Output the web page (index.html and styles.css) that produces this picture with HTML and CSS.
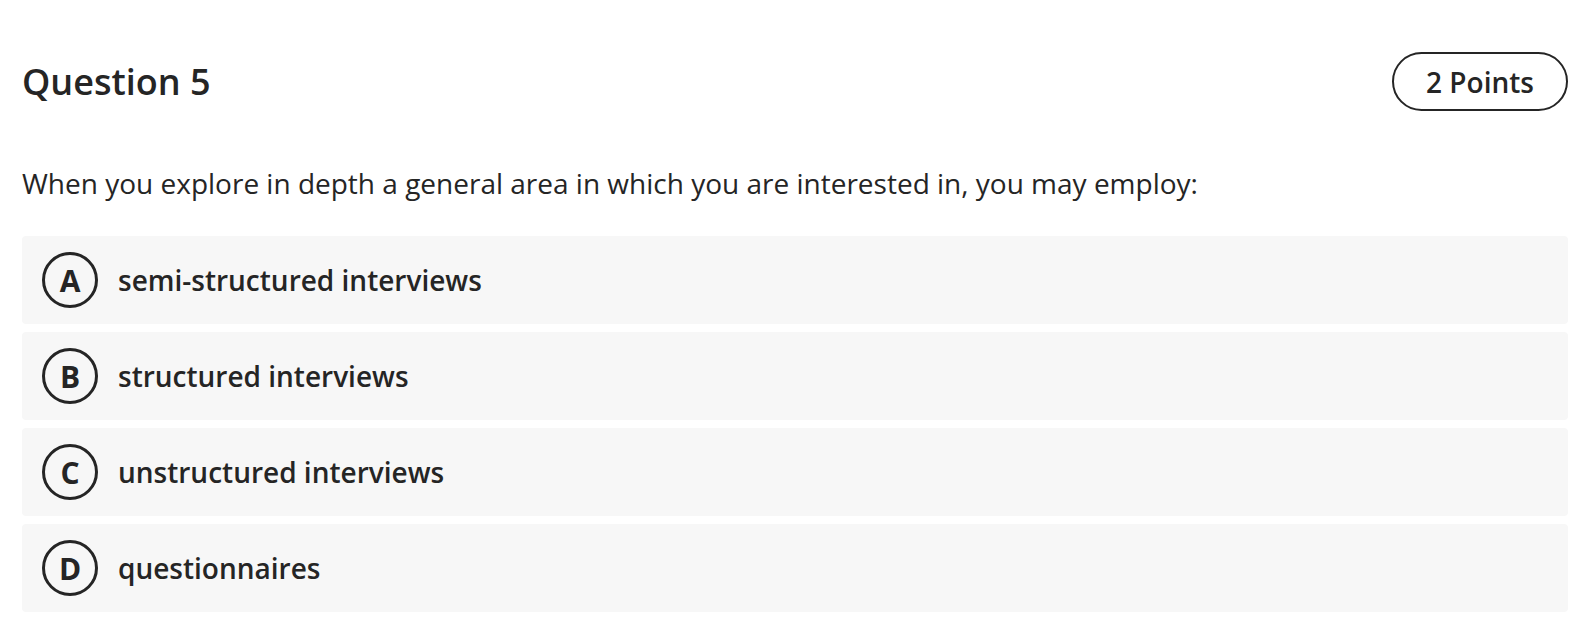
FILE: index.html
```html
<!DOCTYPE html>
<html>
<head>
<meta charset="utf-8">
<link rel="stylesheet" href="styles.css">
</head>
<body>
<div class="question">
  <div class="q-header">
    <h2 class="q-title">Question 5</h2>
    <div class="q-points">2 Points</div>
  </div>
  <p class="q-text">When you explore in depth a general area in which you are interested in, you may employ:</p>
  <div class="options">
    <div class="option"><span class="letter">A</span><span class="label">semi-structured interviews</span></div>
    <div class="option"><span class="letter">B</span><span class="label">structured interviews</span></div>
    <div class="option"><span class="letter">C</span><span class="label">unstructured interviews</span></div>
    <div class="option"><span class="letter">D</span><span class="label">questionnaires</span></div>
  </div>
</div>
</body>
</html>
```
FILE: styles.css
```css
html, body {
  margin: 0;
  padding: 0;
  background: #fff;
}
body {
  font-family: "Open Sans", "Noto Sans", sans-serif;
  color: #252525;
}
.question {
  padding: 52px 16px 0 22px;
}
.q-header {
  display: flex;
  justify-content: space-between;
  align-items: center;
  height: 59px;
}
.q-title {
  margin: 0;
  font-size: 36px;
  font-weight: 600;
  line-height: 1;
}
.q-points {
  box-sizing: border-box;
  width: 176px;
  height: 59px;
  border: 2px solid #252525;
  border-radius: 30px;
  display: flex;
  align-items: center;
  justify-content: center;
  font-size: 28px;
  font-weight: 600;
}
.q-text {
  margin: 52px 0 0 0;
  font-size: 28px;
  line-height: 40px;
  font-weight: 400;
}
.options {
  margin-top: 33px;
  display: flex;
  flex-direction: column;
  gap: 8px;
}
.option {
  height: 88px;
  background: #f7f7f7;
  border-radius: 4px;
  display: flex;
  align-items: center;
  padding-left: 20px;
  gap: 20px;
}
.letter {
  box-sizing: border-box;
  width: 56px;
  height: 56px;
  border: 3px solid #252525;
  border-radius: 50%;
  display: flex;
  align-items: center;
  justify-content: center;
  font-size: 30px;
  font-weight: 700;
  flex-shrink: 0;
}
.label {
  font-size: 28px;
  font-weight: 600;
}
```
